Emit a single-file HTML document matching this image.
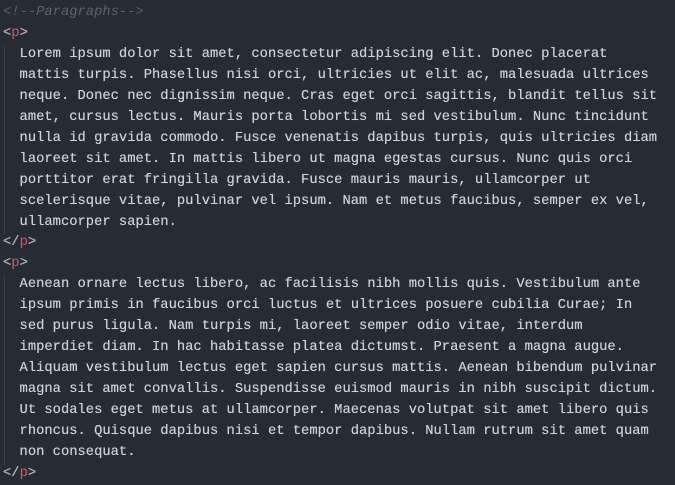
<!DOCTYPE html>
<html><head><meta charset="utf-8"><style>
html,body{margin:0;padding:0;background:#272b33;width:675px;height:483px;overflow:hidden}
pre{margin:0;position:absolute;left:3px;top:3px;font-family:"Liberation Mono",monospace;font-size:13.8px;line-height:20.95px;color:#ccd2dc;white-space:pre;text-shadow:0 0 0.4px #ccd2dc}
.c{color:#5b6270;font-style:italic;text-shadow:none}
.b{color:#abb2bf}
.t{color:#e05561;text-shadow:none}
.g{position:absolute;left:4px;width:1px;background:#3b4048}
</style></head><body>
<div class="g" style="top:45px;height:189px"></div>
<div class="g" style="top:276px;height:189px"></div>
<pre><span class="c">&lt;!--Paragraphs--&gt;</span>
<span class="b">&lt;</span><span class="t">p</span><span class="b">&gt;</span>
  Lorem ipsum dolor sit amet, consectetur adipiscing elit. Donec placerat
  mattis turpis. Phasellus nisi orci, ultricies ut elit ac, malesuada ultrices
  neque. Donec nec dignissim neque. Cras eget orci sagittis, blandit tellus sit
  amet, cursus lectus. Mauris porta lobortis mi sed vestibulum. Nunc tincidunt
  nulla id gravida commodo. Fusce venenatis dapibus turpis, quis ultricies diam
  laoreet sit amet. In mattis libero ut magna egestas cursus. Nunc quis orci
  porttitor erat fringilla gravida. Fusce mauris mauris, ullamcorper ut
  scelerisque vitae, pulvinar vel ipsum. Nam et metus faucibus, semper ex vel,
  ullamcorper sapien.
<span class="b">&lt;/</span><span class="t">p</span><span class="b">&gt;</span>
<span class="b">&lt;</span><span class="t">p</span><span class="b">&gt;</span>
  Aenean ornare lectus libero, ac facilisis nibh mollis quis. Vestibulum ante
  ipsum primis in faucibus orci luctus et ultrices posuere cubilia Curae; In
  sed purus ligula. Nam turpis mi, laoreet semper odio vitae, interdum
  imperdiet diam. In hac habitasse platea dictumst. Praesent a magna augue.
  Aliquam vestibulum lectus eget sapien cursus mattis. Aenean bibendum pulvinar
  magna sit amet convallis. Suspendisse euismod mauris in nibh suscipit dictum.
  Ut sodales eget metus at ullamcorper. Maecenas volutpat sit amet libero quis
  rhoncus. Quisque dapibus nisi et tempor dapibus. Nullam rutrum sit amet quam
  non consequat.
<span class="b">&lt;/</span><span class="t">p</span><span class="b">&gt;</span></pre>
</body></html>
